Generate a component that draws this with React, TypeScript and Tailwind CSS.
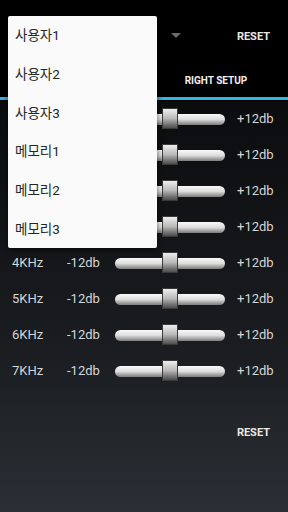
import React from "react";

const BANDS = ["500Hz", "1KHz", "2KHz", "3KHz", "4KHz", "5KHz", "6KHz", "7KHz"];
const PRESETS = ["사용자1", "사용자2", "사용자3", "메모리1", "메모리2", "메모리3"];

const font = { fontFamily: "Roboto, 'Noto Sans CJK KR', sans-serif" };

const Slider = () => {
  return (
    <div className="relative h-[22px] flex items-center">
      <div className="w-[110px] h-[11px] rounded-full bg-gradient-to-b from-[#fafafa] via-[#dcdcdc] to-[#7c7c7c]" />
      <div className="absolute left-[47px] top-0 w-[16px] h-[21px] border border-[#3a3a3a] bg-gradient-to-b from-[#eeeeee] via-[#b9b9b9] to-[#4d4d4d]" />
    </div>
  );
};

export default function App() {
  return (
    <div
      className="relative w-[288px] h-[512px] overflow-hidden bg-gradient-to-b from-[#000000] via-[#121417] to-[#2b2f35] text-white"
      style={font}
    >
      {/* top bar */}
      <div className="bg-black">
        <div className="h-[65px] flex items-center">
          <div className="flex-1 flex justify-end pr-[107px]">
            <div className="w-0 h-0 border-l-[5px] border-r-[5px] border-t-[5px] border-l-transparent border-r-transparent border-t-[#6b6b6b] mt-[6px]" />
          </div>
          <span className="absolute right-[18px] top-[29px] text-[11px] font-bold text-[#e8e8e8]">RESET</span>
        </div>
        <div className="h-[32px] grid grid-cols-2">
          <div className="flex items-center justify-center text-[10px] font-bold text-[#e8e8e8]">LEFT SETUP</div>
          <div className="flex items-center justify-center text-[10px] font-bold text-[#f0f0f0] pb-[2px]">RIGHT SETUP</div>
        </div>
        <div className="h-[3px] bg-[#33b5e5]" />
      </div>

      {/* bands */}
      <div className="mt-[1px] bg-gradient-to-b from-[#0b0c0e] to-[#1d2024]">
        {BANDS.map((band) => (
          <div key={band} className="h-9 grid grid-cols-[55px_48px_110px_1fr] items-center pl-3 text-[13px] text-[#d6d6d6]">
            <span>{band}</span>
            <span>-12db</span>
            <Slider />
            <span className="pl-3">+12db</span>
          </div>
        ))}
      </div>

      <div className="mt-[36px] flex justify-end pr-[18px]">
        <span className="text-[11px] font-bold text-[#e8e8e8]">RESET</span>
      </div>

      {/* preset menu */}
      <div className="absolute left-[8px] top-[16px] w-[149px] h-[232px] bg-[#fafafa] shadow-[0_2px_6px_rgba(0,0,0,0.6)] rounded-[2px] flex flex-col">
        {PRESETS.map((p) => (
          <div key={p} className="flex-1 flex items-center pl-[7px] text-[13.5px] text-[#262626]">
            {p}
          </div>
        ))}
      </div>
    </div>
  );
}
